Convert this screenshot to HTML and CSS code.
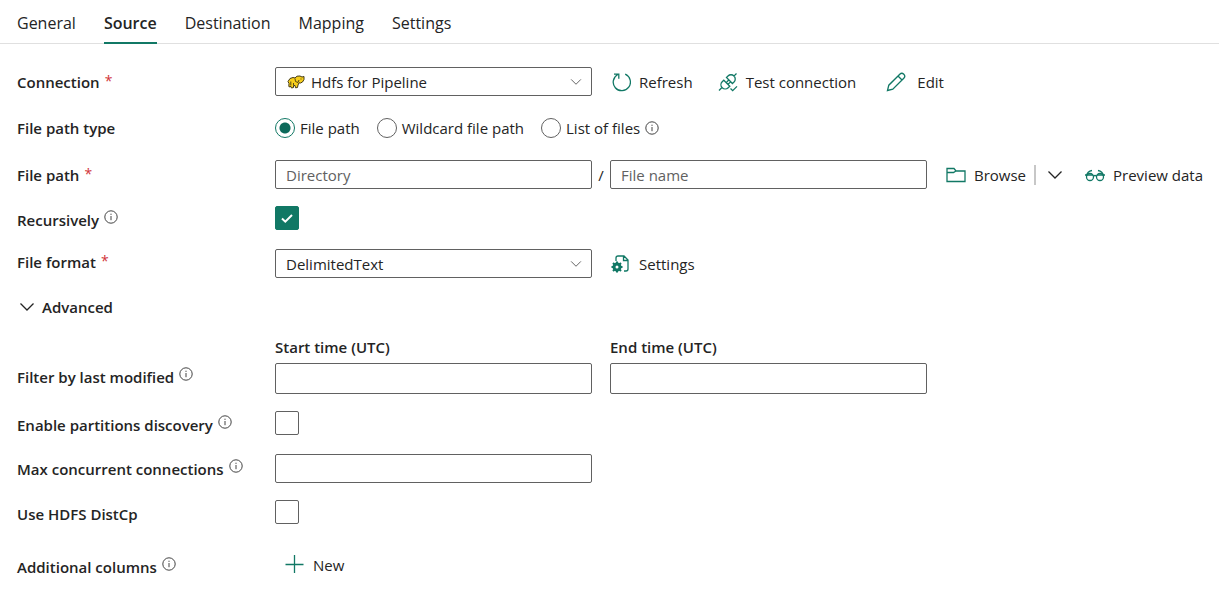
FILE: index.html
```html
<!DOCTYPE html>
<html lang="en">
<head>
<meta charset="utf-8">
<title>Copy activity - Source</title>
<link rel="stylesheet" href="styles.css">
</head>
<body>
<svg class="defs" aria-hidden="true">
  <symbol id="info" viewBox="0 0 14 14"><circle cx="7" cy="7" r="6.200"/><path d="M7 6v4.200M7 3.700v1.200"/></symbol>
  <symbol id="chevron" viewBox="0 0 16 16"><path d="M1.500 4.500 8 11l6.500-6.500"/></symbol>
</svg>
<div class="tabs" role="tablist">
  <button class="tab" role="tab" type="button">General</button>
  <button class="tab tab--active" role="tab" type="button" aria-selected="true">Source</button>
  <button class="tab" role="tab" type="button">Destination</button>
  <button class="tab" role="tab" type="button">Mapping</button>
  <button class="tab" role="tab" type="button">Settings</button>
</div>
<form class="form">
  <div class="row">
    <label class="label" for="connection">Connection <span class="required">*</span></label>
    <div class="select">
      <select class="box select__input select__input--icon" id="connection"><option>Hdfs for Pipeline</option></select>
      <svg class="select__logo" viewBox="0 0 18 14" aria-hidden="true">
        <path d="M1 6.500 3 3.500 6 2.500 8 3 10 1.200 13 1 15 2 17 1.500 17 4.500 15.500 7 13.500 8 12 7.800 11 10 10.500 12.500 8.500 12.800 8 10.500 6.500 10.500 6.500 12.500 4.500 13 3.500 11 3 12 1.800 11.500 2 8.500Z" fill="#f8cf1c" stroke="#443a14" stroke-width="1"/>
        <path d="M8 3.500 8.500 6.500 11 7.500 12 5M3.800 6.500v4M14 3.500v1M6.500 8v2" fill="none" stroke="#443a14" stroke-width=".9"/>
      </svg>
      <svg class="select__arrow" aria-hidden="true"><use href="#chevron"/></svg>
    </div>
    <div class="actions actions--wide">
      <button class="action" type="button">
        <svg class="icon" viewBox="0 0 20 20" aria-hidden="true"><path d="M14.200 2.200A8.600 8.600 0 1 1 6.800 2.500M3 2.200h4.800v4.600"/></svg>Refresh</button>
      <button class="action" type="button">
        <svg class="icon" viewBox="0 0 20 20" aria-hidden="true"><path d="M1 18.500 4.200 15.300M5.800 8.200l6 6-1.600 1.500a4.200 4.200 0 0 1-6-6ZM8.500 5.500l1.500-1.500a4.200 4.200 0 0 1 6 6l-1.600 1.500ZM15.900 4.100 18.500 1.500M8.200 10.600l2.300-2.300M10 12.400l2.300-2.300M12.500 16.500l2.200 2.200 4.300-4.300"/></svg>Test connection</button>
      <button class="action action--edit" type="button">
        <svg class="icon" viewBox="0 0 20 20" aria-hidden="true"><path d="M1.500 18.500 2.800 13.200 13.800 2.200a2.700 2.700 0 0 1 4 4L6.800 17.200ZM12 4l4 4"/></svg>Edit</button>
    </div>
  </div>

  <div class="row row--radios" role="radiogroup" aria-labelledby="path-type">
    <span class="label" id="path-type">File path type</span>
    <div class="radios">
      <label class="radio"><input class="radio__input" type="radio" name="type" checked>File path</label>
      <label class="radio"><input class="radio__input" type="radio" name="type">Wildcard file path</label>
      <label class="radio"><input class="radio__input" type="radio" name="type">List of files</label>
      <svg class="info info--inline" aria-hidden="true"><use href="#info"/></svg>
    </div>
  </div>

  <div class="row">
    <label class="label" for="directory">File path <span class="required">*</span></label>
    <input class="box" id="directory" type="text" placeholder="Directory">
    <span class="slash">/</span>
    <input class="box" type="text" placeholder="File name" aria-label="File name">
    <div class="actions">
      <button class="action" type="button">
        <svg class="icon" viewBox="0 0 20 20" aria-hidden="true"><path d="M1 16.500V3.500h7l2 2.500h9v10.500ZM1 7.500h6.500L10 6"/></svg>Browse</button>
      <button class="more" type="button" aria-label="More browse options"><svg class="chevron" aria-hidden="true"><use href="#chevron"/></svg></button>
      <button class="action action--preview" type="button">
        <svg class="icon" viewBox="0 0 20 20" aria-hidden="true"><circle cx="5" cy="12" r="3.500"/><circle cx="15" cy="12" r="3.500"/><path d="M8.500 11q1.500-1 3 0M1.500 11C2 8 4 6 7 5.500M18.500 11C18 8 16 6 13 5.500M0 10h8M12 10h8"/></svg>Preview data</button>
    </div>
  </div>

  <div class="row row--tight">
    <label class="label label--low" for="recursive">Recursively <svg class="info" aria-hidden="true"><use href="#info"/></svg></label>
    <div class="checkbox"><input class="checkbox__input" id="recursive" type="checkbox" checked>
      <svg class="checkbox__mark" viewBox="0 0 14 14" aria-hidden="true"><path d="M2 7.500 5.300 10.700 12 4"/></svg></div>
  </div>

  <div class="row">
    <label class="label label--high" for="format">File format <span class="required">*</span></label>
    <div class="select">
      <select class="box select__input" id="format"><option>DelimitedText</option></select>
      <svg class="select__arrow" aria-hidden="true"><use href="#chevron"/></svg>
    </div>
    <div class="actions actions--wide">
      <button class="action" type="button">
        <svg class="icon" viewBox="0 0 20 20" aria-hidden="true"><path d="M5 7V4q0-2 2-2h6l4 4v9q0 2-2 2h-2M12.500 2v4.500H17"/><circle cx="6" cy="13" r="3" stroke-width="3"/><path stroke-width="2" d="M6 7.500v2M6 16.500v2M.500 13h2M9.500 13h2M2 9l2 2M8 15l2 2M2 17l2-2M8 11l2-2"/></svg>Settings</button>
    </div>
  </div>

  <button class="advanced" type="button" aria-expanded="true"><svg class="chevron" aria-hidden="true"><use href="#chevron"/></svg>Advanced</button>

  <div class="row">
    <label class="head head--start" for="start">Start time (UTC)</label>
    <label class="head head--end" for="end">End time (UTC)</label>
  </div>
  <div class="row row--dates">
    <label class="label label--high" for="start">Filter by last modified <svg class="info" aria-hidden="true"><use href="#info"/></svg></label>
    <input class="box box--tall" id="start" type="text">
    <input class="box box--tall end" id="end" type="text">
  </div>

  <div class="row row--tight">
    <label class="label label--low" for="partitions">Enable partitions discovery <svg class="info" aria-hidden="true"><use href="#info"/></svg></label>
    <div class="checkbox"><input class="checkbox__input" id="partitions" type="checkbox"></div>
  </div>
  <div class="row">
    <label class="label" for="max">Max concurrent connections <svg class="info" aria-hidden="true"><use href="#info"/></svg></label>
    <input class="box" id="max" type="text">
  </div>
  <div class="row row--tight">
    <label class="label label--low" for="distcp">Use HDFS DistCp</label>
    <div class="checkbox"><input class="checkbox__input" id="distcp" type="checkbox"></div>
  </div>
  <div class="row row--last">
    <span class="label label--low">Additional columns <svg class="info" aria-hidden="true"><use href="#info"/></svg></span>
    <button class="action action--new" type="button">
      <svg class="icon" viewBox="0 0 20 20" aria-hidden="true"><path d="M9.500 0v18M.500 9.500h18"/></svg>New</button>
  </div>
</form>
</body>
</html>
```
FILE: styles.css
```css
* { box-sizing: border-box; }

body {
  margin: 0;
  background: #fff;
  color: #242424;
  font: 15px/20px "Open Sans", "Noto Sans", sans-serif;
}

button, input, select { font: inherit; color: inherit; }

button {
  padding: 0;
  border: 0;
  background: none;
  cursor: pointer;
}

svg {
  flex: none;
  fill: none;
  stroke: currentColor;
}

.defs { position: absolute; width: 0; height: 0; }

.tabs {
  display: flex;
  gap: 28px;
  padding: 0 17px;
  border-bottom: 1px solid #e0e0e0;
}

.tab {
  height: 44px;
  margin-bottom: -1px;
  padding-top: 3px;
  border-bottom: 2px solid transparent;
  font-size: 16px;
}

.tab--active {
  border-color: #117865;
  font-weight: 600;
}

.form { padding: 23px 0 20px 17px; }

.row {
  display: grid;
  grid-template-columns: 258px minmax(0, 1fr) 18px minmax(0, 1fr) 292px;
  align-items: center;
}

.row + .row { margin-top: 19px; }
.row + .row--tight { margin-top: 17px; }
.row + .row--dates { margin-top: 6px; }
.row + .row--last { margin-top: 29px; }
.row--radios { height: 26px; }

.label {
  display: flex;
  gap: 5px;
  font-weight: 600;
}

.label--low { padding-top: 4px; }
.label--high { padding-bottom: 4px; }

.required {
  color: #d13438;
  font-size: 14px;
  font-weight: 400;
  line-height: 18px;
}

.info {
  width: 14px;
  height: 14px;
  color: #424242;
}

.box {
  width: 100%;
  height: 29px;
  padding: 0 10px;
  border: 1px solid #616161;
  border-radius: 2px;
  background: #fff;
}

.box--tall { height: 31px; }
.box::placeholder { color: #616161; opacity: 1; }
.end { grid-column: 4; }
.slash { text-align: center; }

.select { display: grid; align-items: center; }
.select > * { grid-area: 1 / 1; }
.select__input { appearance: none; }
.select__input--icon { padding-left: 35px; }

.select__logo {
  width: 18px;
  height: 14px;
  margin-left: 12px;
  pointer-events: none;
}

.select__arrow {
  justify-self: end;
  width: 12px;
  height: 12px;
  margin-right: 10px;
  color: #616161;
  stroke-width: 1.300;
  pointer-events: none;
}

.radios {
  display: flex;
  grid-column: 2 / -1;
  align-items: center;
  gap: 17px;
}

.radio { display: flex; align-items: center; gap: 5px; }

.radio__input {
  appearance: none;
  width: 20px;
  height: 20px;
  margin: 0;
  border: 1px solid #616161;
  border-radius: 50%;
}

.radio__input:checked {
  border-color: #117865;
  background: radial-gradient(circle, #0c695a 5px, transparent 6px);
}

.info--inline { margin-left: -12px; }

.actions {
  display: flex;
  align-items: center;
  padding-left: 19px;
}

.actions--wide {
  grid-column: 3 / -1;
  gap: 25px;
}

.action {
  display: flex;
  align-items: center;
  gap: 8px;
  white-space: nowrap;
}

.action--edit { gap: 11px; padding-left: 5px; }
.action--new { padding-left: 10px; }

.icon {
  width: 20px;
  height: 20px;
  color: #117865;
  stroke-width: 1.300;
}

.more {
  display: flex;
  align-items: center;
  height: 20px;
  margin-left: 8px;
  padding-left: 11px;
  border-left: 2px solid #c7c7c7;
}

.action--preview { margin-left: 22px; }

.chevron {
  width: 16px;
  height: 16px;
  stroke-width: 1.300;
}

.checkbox {
  display: grid;
  place-items: center;
  width: 24px;
  height: 24px;
}

.checkbox > * { grid-area: 1 / 1; }

.checkbox__input {
  appearance: none;
  width: 24px;
  height: 24px;
  margin: 0;
  border: 1px solid #616161;
  border-radius: 2px;
}

.checkbox__input:checked {
  border-color: #117865;
  background: #117865;
}

.checkbox__mark {
  width: 14px;
  height: 14px;
  color: #fff;
  stroke-width: 2;
  pointer-events: none;
}

.advanced {
  display: flex;
  align-items: center;
  gap: 7px;
  height: 24px;
  margin: 17px 0 18px 2px;
  font-weight: 600;
}

.head { font-weight: 600; }
.head--start { grid-column: 2; }
.head--end { grid-column: 4; }
```
